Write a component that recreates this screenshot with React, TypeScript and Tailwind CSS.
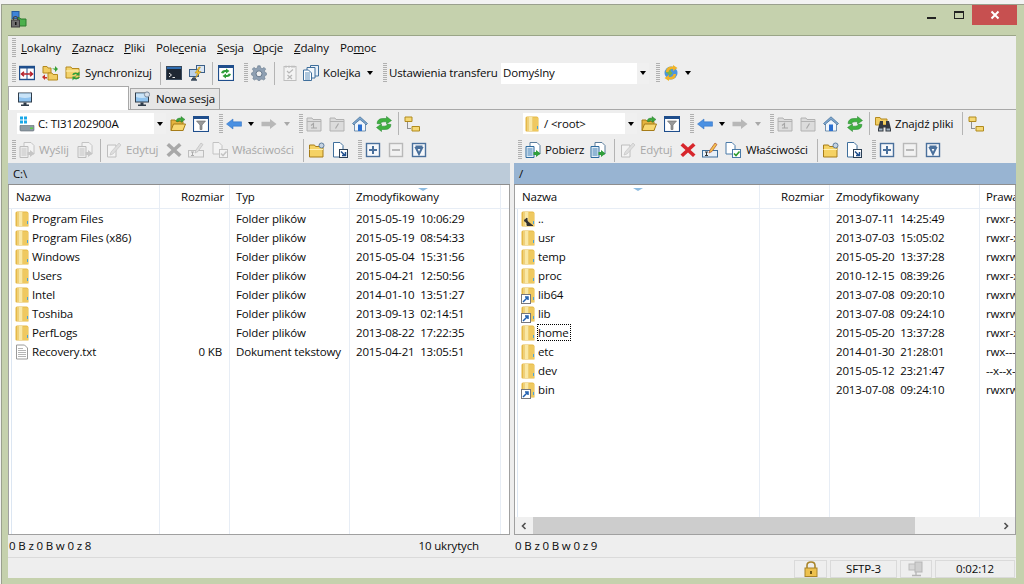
import React from 'react';

type IconProps = { dim?: boolean };
type Kids = { children: React.ReactNode };

function Svg({ children, dim }: Kids & IconProps) {
  return (
    <svg width="16" height="16" viewBox="0 0 16 16" className={`shrink-0 ${dim ? 'opacity-35 grayscale' : ''}`}>
      {children}
    </svg>
  );
}

function Folder() {
  return (
    <Svg>
      <path d="M0.5 2 Q0.5 0.5 2 0.5 H11.5 Q13.5 0.5 13.5 2.5 V15.5 H1.5 Q0.5 15.5 0.5 14.5 Z" fill="#e5b947" />
      <rect x="2.5" y="1" width="5" height="14" fill="#f9e8a6" />
      <path d="M2.5 1 H4 V15 H2.5 Z" fill="#efd07a" />
      <rect x="8" y="1.5" width="5" height="13.5" fill="#efc960" />
      <rect x="12" y="10" width="1" height="3" fill="#4aa3d8" />
    </Svg>
  );
}

function ShortcutBadge() {
  return (
    <span className="absolute left-0 bottom-[-1px] w-[10px] h-[10px] bg-white border border-[#77777c] flex items-center justify-center">
      <svg width="8" height="8" viewBox="0 0 8 8">
        <path d="M1 7 L5 3 M3 2 H6 V5" stroke="#1f5fb0" strokeWidth="1.5" fill="none" />
      </svg>
    </span>
  );
}

function RowIcon({ kind }: { kind: string }) {
  if (kind === 'txt') {
    return (
      <Svg>
        <path d="M1.5 1 H9.5 L12.5 4 V15 H1.5 Z" fill="#fff" stroke="#9a9a9a" />
        <path d="M3 4.5 H8 M3 6.5 H11 M3 8.5 H11 M3 10.5 H11 M3 12.5 H11" stroke="#b5b5b5" />
      </Svg>
    );
  }
  return (
    <span className="relative w-[16px] h-[16px] shrink-0">
      <Folder />
      {kind === 'link' && <ShortcutBadge />}
      {kind === 'up' && (
        <svg width="12" height="10" viewBox="0 0 12 10" className="absolute left-[2px] top-[6px]">
          <path d="M1 3.5 L4 1 V6 Z M4 3.5 V8.5 H10" fill="#333" stroke="#333" strokeWidth="1" />
        </svg>
      )}
    </span>
  );
}

function Compare() {
  return (
    <Svg>
      <rect x="0.5" y="1.5" width="15" height="13" fill="#fff" stroke="#1f4e8c" strokeWidth="1.4" />
      <rect x="0.5" y="1.5" width="15" height="2" fill="#1f4e8c" />
      <path d="M8 3 V14" stroke="#1f4e8c" />
      <path d="M2.5 9 H13.5 M5 6.8 L2.5 9 L5 11.2 M11 6.8 L13.5 9 L11 11.2" stroke="#b5202a" strokeWidth="1.5" fill="none" />
    </Svg>
  );
}

function SyncFolders() {
  return (
    <Svg>
      <path d="M1 1.5 H5 L6 3 H9 V8 H1 Z" fill="#f1cd62" stroke="#b58a1e" />
      <path d="M6 8 H10 L11 9.5 H15.5 V15 H6 Z" fill="#f1cd62" stroke="#b58a1e" />
      <path d="M10 3.5 H13 V1 L16 4 L13 7 V5" fill="#35a035" />
      <path d="M5 12 H3 V9.5 L0 12 L3 15 V13.5 H5 Z" fill="#c8332b" />
    </Svg>
  );
}

function SyncFolder() {
  return (
    <Svg>
      <path d="M1 2 H6 L7 3.5 H14 V13 H1 Z" fill="#f3d36c" stroke="#b58a1e" />
      <path d="M1 6 H14" stroke="#fff2b8" />
      <path d="M7 9.5 Q9 6.5 13 8 L14.5 6.5 V10.5 H10.5 L12 9.2 Q10 8.6 9 10 Z" fill="#2f9e3a" />
      <path d="M15 12 Q13 15.5 9 14 L7.5 15.5 V11.5 H11.5 L10 12.8 Q12 13.4 13 12 Z" fill="#2f9e3a" />
    </Svg>
  );
}

function Terminal() {
  return (
    <Svg>
      <rect x="0.5" y="1.5" width="15" height="13" fill="#1e2733" stroke="#3a4a5c" />
      <rect x="1" y="2" width="14" height="2" fill="#2f6db0" />
      <path d="M3 8 L5.5 10 L3 12 M6.5 12.5 H9" stroke="#e8e8e8" fill="none" />
    </Svg>
  );
}

function Putty() {
  return (
    <Svg>
      <rect x="7.5" y="0.5" width="8" height="7" fill="#dbe6f3" stroke="#3b5f88" />
      <rect x="0.5" y="4.5" width="9" height="7" fill="#bcd2ea" stroke="#3b5f88" />
      <path d="M3 13.5 H7 M5 11.5 V14 M2 15 H8" stroke="#3b4b5c" strokeWidth="1.3" />
      <path d="M10 2 L6 8 H8.5 L6.5 13 L12 6.5 H9 L11.5 2 Z" fill="#f2c22e" stroke="#b5871a" strokeWidth="0.5" />
    </Svg>
  );
}

function Refresh2() {
  return (
    <Svg>
      <rect x="0.5" y="0.5" width="15" height="15" fill="#fff" stroke="#1f4e8c" strokeWidth="1.2" />
      <rect x="1" y="1" width="14" height="2" fill="#1f4e8c" />
      <path d="M3 8 Q4 4.5 8 5 L8 3.5 L11.5 6 L8 8.5 V7 Q6 6.6 5.3 8.5 Z" fill="#2f9e3a" />
      <path d="M13 9 Q12 12.5 8 12 L8 13.5 L4.5 11 L8 8.5 V10 Q10 10.4 10.7 8.5 Z" fill="#2f9e3a" />
    </Svg>
  );
}

function Gear({ dim }: IconProps) {
  return (
    <Svg dim={dim}>
      <path
        d="M6.8 0.8 H9.2 L9.6 2.9 L11.3 3.6 L13.1 2.4 L14.7 4.1 L13.4 5.9 L14.1 7.5 L15.4 7.9 V10.1 L14.1 10.5 L13.4 12.1 L14.2 13.7 L12.6 15 L11 14 L9.4 14.6 L9 15.4 H7 L6.6 14.6 L5 14 L3.4 15 L1.8 13.7 L2.6 12.1 L1.9 10.5 L0.6 10.1 V7.9 L1.9 7.5 L2.6 5.9 L1.3 4.1 L2.9 2.4 L4.7 3.6 L6.4 2.9 Z"
        fill="#8fa0b3"
        stroke="#66788c"
        strokeWidth="0.6"
      />
      <circle cx="8" cy="8.8" r="3" fill="#eeeeee" stroke="#66788c" />
    </Svg>
  );
}

function QueueDoc() {
  return (
    <Svg dim>
      <rect x="2" y="1.5" width="12" height="14" fill="#fff" stroke="#666" />
      <path d="M4 0.5 V3 M7 0.5 V3 M10 0.5 V3 M12 0.5 V3" stroke="#666" />
      <path d="M5 6 L7 8 L11 4.5 M5.5 10 L10 14 M10 10 L5.5 14" stroke="#555" strokeWidth="1.2" fill="none" />
    </Svg>
  );
}

function QueueDocs() {
  return (
    <Svg>
      <path d="M7.5 0.5 H15.5 V11 H7.5 Z" fill="#e9f1f9" stroke="#3f6f9c" />
      <path d="M4 2.5 H12 V13 H4 Z" fill="#f3f7fb" stroke="#3f6f9c" />
      <path d="M0.5 5 H5.5 L8.5 8 V15.5 H0.5 Z" fill="#fff" stroke="#3f6f9c" />
      <path d="M2 8 H7 M2 10 H7 M2 12 H7 M2 14 H7" stroke="#5f90bc" />
    </Svg>
  );
}

function Globe() {
  return (
    <Svg>
      <circle cx="8" cy="8" r="6.5" fill="#4c95dd" />
      <path d="M5 2.5 L9 3 L7.5 6 L9.5 8 L7 11 L4.5 8.5 L2.5 7 Z" fill="#79b34a" />
      <path d="M3 7 Q3 1 10 1.5 L10 0 L14.5 3 L10 6 V4 Q6 3.5 5.5 7 Z" fill="#f0b429" />
      <path d="M13 9 Q13 15 6 14.5 L6 16 L1.5 13 L6 10 V12 Q10 12.5 10.5 9 Z" fill="#f0b429" />
    </Svg>
  );
}

function Monitor({ small }: { small?: boolean }) {
  return (
    <svg width="16" height="16" viewBox="0 0 16 16" className="shrink-0">
      <rect x="1" y="1.5" width="14" height="10" fill="#2f3c4a" />
      <rect x="2" y="2.5" width="12" height="8" fill="#8fc3ef" />
      <path d="M2 2.5 H14 V6 Q8 8 2 6 Z" fill="#c8e3f8" />
      <path d="M6.5 11.5 H9.5 V13.5 H12 V15 H4 V13.5 H6.5 Z" fill="#2f3c4a" />
      {small && <circle cx="13" cy="3.5" r="2.6" fill="#d8dfe8" stroke="#7e8ea0" />}
    </svg>
  );
}

function Drive() {
  return (
    <svg width="16" height="16" viewBox="0 0 16 16" className="shrink-0">
      <rect x="1" y="0.5" width="3" height="3" fill="#1aa8e8" />
      <rect x="5" y="0.5" width="3" height="3" fill="#1aa8e8" />
      <rect x="1" y="4.5" width="3" height="3" fill="#1aa8e8" />
      <rect x="5" y="4.5" width="3" height="3" fill="#1aa8e8" />
      <path d="M1 9.5 H15 V14 Q15 15 14 15 H2 Q1 15 1 14 Z" fill="#8d9aa3" stroke="#5e6a72" strokeWidth="0.6" />
      <rect x="11" y="11.5" width="3" height="1.5" fill="#5bd04a" />
    </svg>
  );
}

function OpenFolder() {
  return (
    <Svg>
      <path d="M1 4 H5 L6 5.5 H13 V14.5 H1 Z" fill="#e5b43f" stroke="#a67c18" />
      <path d="M1 14.5 L3.5 8 H15.5 L13 14.5 Z" fill="#f8d872" stroke="#a67c18" />
      <path d="M6 5 Q7 1.5 11 2.2 V0.5 L15 3.5 L11 6.5 V4.5 Q8.5 4 8 6 Z" fill="#3da63d" stroke="#21752a" strokeWidth="0.4" />
    </Svg>
  );
}

function Filter() {
  return (
    <Svg>
      <rect x="0.5" y="0.5" width="15" height="15" fill="#fff" stroke="#1f4e8c" strokeWidth="1.1" />
      <rect x="1" y="1" width="14" height="2" fill="#1f4e8c" />
      <path d="M3.5 5 H12.5 L9 9 V13.5 H7 V9 Z" fill="#9a9a9a" stroke="#666" strokeWidth="0.6" />
    </Svg>
  );
}

function Back() {
  return (
    <Svg>
      <path d="M0.5 8 L7 3 V5.8 H15.5 V10.2 H7 V13 Z" fill="#4a90e2" stroke="#2a6cc0" strokeWidth="0.5" />
    </Svg>
  );
}

function Forward() {
  return (
    <Svg dim>
      <path d="M15.5 8 L9 3 V5.8 H0.5 V10.2 H9 V13 Z" fill="#555" />
    </Svg>
  );
}

function DimFolder({ glyph }: { glyph: string }) {
  return (
    <Svg dim>
      <path d="M1 2 H6 L7 3.5 H15 V15 H1 Z" fill="#bbb" stroke="#444" />
      <path d="M1 5.5 H15" stroke="#444" />
      <path d={glyph} stroke="#222" strokeWidth="1.1" fill="none" />
    </Svg>
  );
}

function Home() {
  return (
    <Svg>
      <path d="M8 0.8 L15.5 7.5 L14 9 L8 3.8 L2 9 L0.5 7.5 Z" fill="#7fa8cf" stroke="#3d6a95" strokeWidth="0.7" />
      <path d="M2.5 8 L8 3.5 L13.5 8 V15 H2.5 Z" fill="#f1f6fb" stroke="#3d6a95" strokeWidth="0.7" />
      <rect x="6" y="8.5" width="4" height="6.5" fill="#2a6fd0" />
    </Svg>
  );
}

function Refresh() {
  return (
    <Svg>
      <path d="M1 7.5 Q1.5 2 8 2.5 L10.5 2.5 V0.5 L15.5 4.5 L10.5 8 V5.8 H8 Q4.8 5.6 4.5 8 Z" fill="#3fb13f" stroke="#20812a" strokeWidth="0.5" />
      <path d="M15 8.5 Q14.5 14 8 13.5 H5.5 V15.5 L0.5 11.5 L5.5 8 V10.2 H8 Q11.2 10.4 11.5 8 Z" fill="#3fb13f" stroke="#20812a" strokeWidth="0.5" />
    </Svg>
  );
}

function Tree() {
  return (
    <Svg>
      <path d="M1 1 H8 V5.5 H1 Z" fill="#f5d875" stroke="#b08a1e" />
      <path d="M8 10.5 H15.5 V15 H8 Z" fill="#f5d875" stroke="#b08a1e" />
      <path d="M3.5 6.5 V12.5 H7" stroke="#333" strokeDasharray="1 1" fill="none" />
    </Svg>
  );
}

function Binoculars() {
  return (
    <Svg>
      <path d="M0.5 1.5 H5 L6 3 H12 V9 H0.5 Z" fill="#f1cd62" stroke="#b58a1e" />
      <path d="M5 5 H8 V9 H11 V5 H14 L16 13 V15.5 H10.5 V11.5 H8.5 V15.5 H3 V13 Z" fill="#33383f" />
      <rect x="4" y="12.5" width="3.5" height="2" fill="#9fb0c0" />
      <rect x="11.5" y="12.5" width="3.5" height="2" fill="#9fb0c0" />
    </Svg>
  );
}

function SendDoc({ dim }: IconProps) {
  return (
    <Svg dim={dim}>
      <path d="M5 0.5 H12 L15 3.5 V12 H5 Z" fill="#fff" stroke="#5b7c9a" />
      <path d="M1 4.5 H9 V15.5 H1 Z" fill="#e3eef7" stroke="#2d6a9e" />
      <path d="M2.5 7 H7.5 M2.5 9 H7.5 M2.5 11 H7.5 M2.5 13 H7.5" stroke="#3f7fb3" />
      <path d="M8.5 10 H11 V8 L15.5 11.5 L11 15 V13 H8.5 Z" fill="#2f9e3a" />
    </Svg>
  );
}

function Pencil({ dim }: IconProps) {
  return (
    <Svg dim={dim}>
      <path d="M1.5 3 H10 V15 H1.5 Z" fill="#fff" stroke="#666" />
      <path d="M4 13 L5 10 L13 1 L15 3 L7 12 Z" fill="#f2c14e" stroke="#866a1a" strokeWidth="0.6" />
    </Svg>
  );
}

function Cross({ dim }: IconProps) {
  return (
    <svg width="16" height="16" viewBox="0 0 16 16" className="shrink-0">
      <path
        d="M3 1 L8 5.5 L13 1 L15.5 3.5 L10.5 8 L15.5 12.5 L13 15 L8 10.5 L3 15 L0.5 12.5 L5.5 8 L0.5 3.5 Z"
        fill={dim ? '#a8a8a8' : '#d7262c'}
      />
    </svg>
  );
}

function Rename({ dim }: IconProps) {
  return (
    <Svg dim={dim}>
      <rect x="0.5" y="8.5" width="15" height="6.5" fill="#e8f0f8" stroke="#3f6f9c" />
      <path d="M3 10 H6 M3 13.5 H6 M4.5 10 V13.5" stroke="#333" />
      <path d="M7 11 L8 8 L13 1 L15 2.5 L10 9.5 Z" fill="#f2c14e" stroke="#a23b1c" strokeWidth="0.6" />
    </Svg>
  );
}

function Props({ dim }: IconProps) {
  return (
    <Svg dim={dim}>
      <path d="M1 0.5 H7 L10 3.5 V12 H1 Z" fill="#fff" stroke="#4a7aa8" />
      <rect x="7.5" y="7.5" width="8" height="8" fill="#fff" stroke="#4a7aa8" />
      <path d="M9 11.5 L11 13.5 L14.5 9.5" stroke="#2c9a2c" strokeWidth="1.6" fill="none" />
    </Svg>
  );
}

function NewFolder() {
  return (
    <Svg>
      <path d="M0.5 3 H5.5 L6.5 4.5 H14 V15 H0.5 Z" fill="#f5d264" stroke="#a67c18" />
      <path d="M0.5 7.5 H14" stroke="#fff0b2" />
      <circle cx="12.5" cy="3.5" r="2.5" fill="#c5d3e2" stroke="#5e7d9f" />
    </Svg>
  );
}

function ShortcutFile() {
  return (
    <Svg>
      <path d="M1.5 0.5 H8 L11 3.5 V15 H1.5 Z" fill="#fff" stroke="#3f6f9c" />
      <rect x="7.5" y="7.5" width="8" height="8" fill="#fff" stroke="#2b3f55" />
      <path d="M9 9.5 L13 13.5 M10 13.5 H13.5 V10" stroke="#1f4e8c" strokeWidth="1.5" fill="none" />
    </Svg>
  );
}

function BoxIcon({ glyph, dim }: IconProps & { glyph: string }) {
  return (
    <svg width="16" height="16" viewBox="0 0 16 16" className={`shrink-0 ${dim ? 'opacity-40 grayscale' : ''}`}>
      <rect x="1.5" y="1.5" width="13" height="13" fill="#f6f8fb" stroke="#4a709c" strokeWidth="1.4" />
      <path d={glyph} stroke="#4a709c" strokeWidth="2" fill="none" />
    </svg>
  );
}

function Lock() {
  return (
    <Svg>
      <path d="M4 7 V4.5 Q4 1 8 1 Q12 1 12 4.5 V7" stroke="#a8842a" strokeWidth="1.6" fill="none" />
      <rect x="2" y="7" width="12" height="8.5" fill="#edc14e" stroke="#a8842a" />
      <rect x="7" y="10" width="2" height="3" fill="#6e5514" />
    </Svg>
  );
}

function NetDim() {
  return (
    <Svg>
      <rect x="1" y="3" width="9" height="6" fill="#d8d8d8" stroke="#bbb" />
      <rect x="7" y="1" width="7" height="10" fill="#cfcfcf" stroke="#b5b5b5" />
      <path d="M8 11 V14 M4 14.5 H13" stroke="#b5b5b5" strokeWidth="1.3" />
    </Svg>
  );
}

function AppIcon() {
  return (
    <svg width="17" height="17" viewBox="0 0 17 17" className="shrink-0">
      <rect x="2" y="0.5" width="7" height="7" fill="#3d83d8" stroke="#245a9c" />
      <path d="M8 6 L11 8 H16 V15 H10 L8 12 Z" fill="#4cb04c" stroke="#2c7a2c" />
      <path d="M3.5 9 V7.5 Q3.5 5.5 5.5 5.5 Q7.5 5.5 7.5 7.5 V9" stroke="#444" strokeWidth="1.2" fill="none" />
      <rect x="1.5" y="9" width="8" height="7" fill="#6f6f6f" stroke="#3e3e3e" />
      <rect x="5" y="11" width="1.5" height="3" fill="#111" />
    </svg>
  );
}

function Grip() {
  return (
    <span className="w-[10px] shrink-0 flex items-center self-stretch pl-[3px]">
      <span className="w-[4px] h-[20px] bg-[repeating-linear-gradient(to_bottom,#b0b0b0_0,#b0b0b0_1px,#eeeeee_1px,#eeeeee_2px)]" />
    </span>
  );
}

function Sep() {
  return <span className="w-[1px] h-[23px] bg-[#b4b4b4] mr-[5px] shrink-0" />;
}

function Caret({ dim }: IconProps) {
  return (
    <span className={`w-0 h-0 border-x-[3.5px] border-x-transparent border-t-[4px] shrink-0 ${dim ? 'border-t-[#a8a8a8]' : 'border-t-black'}`} />
  );
}

function Btn({ children }: Kids) {
  return <span className="w-[23px] h-[22px] flex items-center shrink-0">{children}</span>;
}

function Combo({ width, icon, text }: { width: string; icon?: React.ReactNode; text: string }) {
  return (
    <div className={`${width} h-[21px] bg-white flex items-center shrink-0`}>
      <span className="flex-1 flex items-center min-w-0 pl-[2px] gap-[3px]">
        {icon}
        <span className="whitespace-nowrap">{text}</span>
      </span>
      <span className="w-[12px] h-[21px] bg-[#f0f0f0] flex items-center justify-center">
        <Caret />
      </span>
    </div>
  );
}

const columnBorder = 'border-r border-[#e7edf5]';

function HeaderCell({ className, children }: { className: string } & Kids) {
  return <div className={`h-[24px] flex items-center border-b border-[#e7edf5] shrink-0 ${className}`}>{children}</div>;
}

function Column({ width, label, right, values }: { width: string; label: string; right?: boolean; values: string[] }) {
  return (
    <div className={`${width} shrink-0 flex flex-col ${columnBorder}`}>
      <HeaderCell className={right ? 'justify-end pr-[5px]' : 'pl-[6px]'}>{label}</HeaderCell>
      <div>
        {values.map((value, index) => (
          <div key={index} className={`h-[19px] flex items-center whitespace-pre ${right ? 'justify-end pr-[7px]' : 'pl-[6px]'}`}>
            {value}
          </div>
        ))}
      </div>
    </div>
  );
}

type FileRow = { name: string; icon: string; focus?: boolean };

function NameColumn({ width, rows }: { width: string; rows: FileRow[] }) {
  return (
    <div className={`${width} shrink-0 flex flex-col ${columnBorder}`}>
      <HeaderCell className="pl-[7px]">Nazwa</HeaderCell>
      <div className="flex-1 ml-[2px] pl-[3px] border-l border-[#dce6f2]">
        {rows.map((row) => (
          <div key={row.name} className="h-[19px] flex items-center whitespace-nowrap">
            <RowIcon kind={row.icon} />
            {row.focus ? (
              <span className="h-[17px] flex items-center pr-[2px] border border-dotted border-black">{row.name}</span>
            ) : (
              <span className="ml-[1px]">{row.name}</span>
            )}
          </div>
        ))}
      </div>
    </div>
  );
}

const localRows: FileRow[] = [
  { name: 'Program Files', icon: 'folder' },
  { name: 'Program Files (x86)', icon: 'folder' },
  { name: 'Windows', icon: 'folder' },
  { name: 'Users', icon: 'folder' },
  { name: 'Intel', icon: 'folder' },
  { name: 'Toshiba', icon: 'folder' },
  { name: 'PerfLogs', icon: 'folder' },
  { name: 'Recovery.txt', icon: 'txt' },
];

const remoteRows: FileRow[] = [
  { name: '..', icon: 'up' },
  { name: 'usr', icon: 'folder' },
  { name: 'temp', icon: 'folder' },
  { name: 'proc', icon: 'folder' },
  { name: 'lib64', icon: 'link' },
  { name: 'lib', icon: 'link' },
  { name: 'home', icon: 'folder', focus: true },
  { name: 'etc', icon: 'folder' },
  { name: 'dev', icon: 'folder' },
  { name: 'bin', icon: 'link' },
];

const localDates = ['2015-05-19  10:06:29', '2015-05-19  08:54:33', '2015-05-04  15:31:56', '2015-04-21  12:50:56', '2014-01-10  13:51:27', '2013-09-13  02:14:51', '2013-08-22  17:22:35', '2015-04-21  13:05:51'];
const remoteDates = ['2013-07-11  14:25:49', '2013-07-03  15:05:02', '2015-05-20  13:37:28', '2010-12-15  08:39:26', '2013-07-08  09:20:10', '2013-07-08  09:24:10', '2015-05-20  13:37:28', '2014-01-30  21:28:01', '2015-05-12  23:21:47', '2013-07-08  09:24:10'];
const rights = ['rwxr-xr-x', 'rwxr-xr-x', 'rwxrwxrwx', 'rwxr-xr-x', 'rwxrwxrwx', 'rwxrwxrwx', 'rwxr-xr-x', 'rwx------', '--x--x--x', 'rwxrwxrwx'];
const plusGlyph = 'M4 8 H12 M8 4 V12';
const minusGlyph = 'M4 8 H12';
const collapseGlyph = 'M4.5 4.5 H11.5 M5 6 L8 12 L11 6 Z';

function NavGroup() {
  return (
    <>
      <span className="w-[7px] shrink-0" />
      <Grip />
      <span className="w-[22px] flex items-center shrink-0"><Back /></span>
      <span className="w-[13px] flex shrink-0"><Caret /></span>
      <Btn><Forward /></Btn>
      <span className="w-[12px] flex shrink-0"><Caret dim /></span>
      <Grip />
      <Btn><DimFolder glyph="M5 12 H11 M5 9.5 L7.5 7.5 V12" /></Btn>
      <Btn><DimFolder glyph="M6.5 12.5 L9.5 7.5" /></Btn>
      <span className="w-[24px] flex shrink-0"><Home /></span>
      <span className="w-[22px] flex shrink-0"><Refresh /></span>
      <Sep />
    </>
  );
}

function TreeButtons() {
  return (
    <>
      <Btn><NewFolder /></Btn>
      <span className="w-[16px] flex shrink-0"><ShortcutFile /></span>
      <span className="w-[7px] shrink-0" />
      <Grip />
      <Btn><BoxIcon glyph={plusGlyph} /></Btn>
      <Btn><BoxIcon glyph={minusGlyph} dim /></Btn>
      <BoxIcon glyph={collapseGlyph} />
    </>
  );
}

function LocalPanel() {
  return (
    <div className="w-[502px] shrink-0 flex flex-col">
      <div className="h-[27px] flex items-center pl-[9px]">
        <Combo width="w-[149px]" icon={<Drive />} text="C: TI31202900A" />
        <span className="w-[4px] shrink-0" />
        <Btn><OpenFolder /></Btn>
        <span className="w-[16px] flex shrink-0"><Filter /></span>
        <NavGroup />
        <Tree />
      </div>
      <div className="h-[26px] flex items-center pl-[1px] text-[#a8a8a8]">
        <Grip />
        <span className="w-[20px] flex shrink-0"><SendDoc dim /></span>
        <span className="w-[38px] whitespace-nowrap shrink-0">Wyślij</span>
        <span className="w-[23px] flex shrink-0"><SendDoc dim /></span>
        <Sep />
        <span className="w-[20px] flex shrink-0"><Pencil dim /></span>
        <span className="w-[40px] whitespace-nowrap shrink-0">Edytuj</span>
        <span className="w-[22px] flex shrink-0"><Cross dim /></span>
        <span className="w-[24px] flex shrink-0"><Rename dim /></span>
        <span className="w-[20px] flex shrink-0"><Props dim /></span>
        <span className="w-[71px] whitespace-nowrap shrink-0">Właściwości</span>
        <Sep />
        <TreeButtons />
      </div>
      <div className="h-[22px] pl-[5px] flex items-center bg-[#bccbd9] border-b border-[#8e8e8e]">C:\</div>
      <div className="h-[349px] bg-white border-l border-r border-[#a0a0a0] flex relative overflow-hidden">
        <span className="absolute left-[409px] top-[3px] w-0 h-0 border-x-[5px] border-x-transparent border-t-[3px] border-t-[#8dbbe0]" />
        <NameColumn width="w-[151px]" rows={localRows} />
        <Column width="w-[70px]" label="Rozmiar" right values={['', '', '', '', '', '', '', '0 KB']} />
        <Column width="w-[120px]" label="Typ" values={['Folder plików', 'Folder plików', 'Folder plików', 'Folder plików', 'Folder plików', 'Folder plików', 'Folder plików', 'Dokument tekstowy']} />
        <Column width="w-[151px]" label="Zmodyfikowany" values={localDates} />
        <div className="flex-1 flex flex-col"><HeaderCell className="">{''}</HeaderCell></div>
      </div>
      <div className="h-[23px] border-t border-[#a0a0a0] flex items-center justify-between pl-[1px] pr-[31px]">
        <span>0 B z 0 B w 0 z 8</span>
        <span>10 ukrytych</span>
      </div>
    </div>
  );
}

function RemotePanel() {
  return (
    <div className="flex-1 min-w-0 flex flex-col">
      <div className="h-[27px] flex items-center pl-[9px]">
        <Combo width="w-[114px]" icon={<Folder />} text="/ <root>" />
        <span className="w-[4px] shrink-0" />
        <Btn><OpenFolder /></Btn>
        <span className="w-[16px] flex shrink-0"><Filter /></span>
        <NavGroup />
        <span className="w-[20px] flex shrink-0"><Binoculars /></span>
        <span className="w-[67px] whitespace-nowrap shrink-0">Znajdź pliki</span>
        <Sep />
        <Tree />
      </div>
      <div className="h-[26px] flex items-center pl-[1px]">
        <Grip />
        <span className="w-[20px] flex shrink-0"><SendDoc /></span>
        <span className="w-[45px] whitespace-nowrap shrink-0">Pobierz</span>
        <span className="w-[24px] flex shrink-0"><SendDoc /></span>
        <Sep />
        <span className="w-[20px] flex shrink-0"><Pencil dim /></span>
        <span className="w-[40px] whitespace-nowrap shrink-0 text-[#a8a8a8]">Edytuj</span>
        <span className="w-[22px] flex shrink-0"><Cross /></span>
        <span className="w-[23px] flex shrink-0"><Rename /></span>
        <span className="w-[21px] flex shrink-0"><Props /></span>
        <span className="w-[71px] whitespace-nowrap shrink-0">Właściwości</span>
        <Sep />
        <TreeButtons />
      </div>
      <div className="h-[22px] pl-[5px] flex items-center bg-[#98b4d2] border-b border-[#8e8e8e]">/</div>
      <div className="h-[349px] bg-white border-l border-r border-[#a0a0a0] flex flex-col relative overflow-hidden">
        <span className="absolute left-[118px] top-[3px] w-0 h-0 border-x-[5px] border-x-transparent border-t-[3px] border-t-[#8dbbe0]" />
        <div className="flex-1 min-h-0 flex">
          <NameColumn width="w-[245px]" rows={remoteRows} />
          <Column width="w-[70px]" label="Rozmiar" right values={[]} />
          <Column width="w-[150px]" label="Zmodyfikowany" values={remoteDates} />
          <Column width="w-[60px]" label="Prawa" values={rights} />
        </div>
        <div className="h-[17px] shrink-0 bg-[#f0f0f0] flex items-center">
          <span className="w-[18px] flex justify-center">
            <svg width="8" height="8" viewBox="0 0 8 8"><path d="M5.5 1 L2.5 4 L5.5 7" stroke="#505050" strokeWidth="1.6" fill="none" /></svg>
          </span>
          <span className="w-[382px] h-[17px] bg-[#cdcdcd]" />
          <span className="flex-1" />
          <span className="w-[18px] flex justify-center">
            <svg width="8" height="8" viewBox="0 0 8 8"><path d="M2.5 1 L5.5 4 L2.5 7" stroke="#505050" strokeWidth="1.6" fill="none" /></svg>
          </span>
        </div>
      </div>
      <div className="h-[23px] border-t border-[#a0a0a0] flex items-center pl-[1px]">0 B z 0 B w 0 z 9</div>
    </div>
  );
}

export default function App() {
  return (
    <div className="w-[1024px] h-[584px] overflow-hidden bg-[#f2f2f2] pt-[4px] pl-[1px] text-[11.5px] tracking-[-0.15px] text-[#0a0a0a] [font-family:'Open_Sans','Noto_Sans',sans-serif]">
      <div className="h-[580px] bg-[#c5d1ad] border-t border-l border-[#9aa08e] flex flex-col">
        {/* Title bar */}
        <div className="h-[30px] shrink-0 flex items-start pl-[8px] pr-[7px]">
          <span className="mt-[6px]"><AppIcon /></span>
          <span className="flex-1" />
          <span className="w-[9px] h-[2px] bg-[#222] mt-[12px]" />
          <span className="w-[10px] h-[8px] border border-t-2 border-[#222] mt-[6px] ml-[18px]" />
          <span className="w-[45px] h-[20px] bg-[#c75050] ml-[8px] flex items-center justify-center">
            <svg width="10" height="10" viewBox="0 0 10 10"><path d="M1.5 1.5 L8.5 8.5 M8.5 1.5 L1.5 8.5" stroke="#fff" strokeWidth="2" /></svg>
          </span>
        </div>

        <div className="flex-1 min-h-0 ml-[6px] mr-[8px] mb-[6px] bg-[#eeeeee] border-t border-[#9aa587] flex flex-col">
          {/* Menu */}
          <div className="h-[24px] shrink-0 flex items-center pl-[1px]">
            <Grip />
            <span className="flex items-center gap-[10px] ml-[2px] whitespace-nowrap">
              <span className="w-[41px]"><u>L</u>okalny</span>
              <span className="w-[42px]"><u>Z</u>aznacz</span>
              <span className="w-[22px]"><u>P</u>liki</span>
              <span className="w-[51px]">Pole<u>c</u>enia</span>
              <span className="w-[26px]"><u>S</u>esja</span>
              <span className="w-[31px]"><u>O</u>pcje</span>
              <span className="w-[36px]"><u>Z</u>dalny</span>
              <span>Po<u>m</u>oc</span>
            </span>
          </div>

          {/* Main toolbar */}
          <div className="h-[26px] shrink-0 flex items-center pl-[1px]">
            <Grip />
            <Btn><Compare /></Btn>
            <Btn><SyncFolders /></Btn>
            <span className="w-[20px] flex shrink-0"><SyncFolder /></span>
            <span className="w-[75px] whitespace-nowrap shrink-0">Synchronizuj</span>
            <Sep />
            <Btn><Terminal /></Btn>
            <Btn><Putty /></Btn>
            <Sep />
            <Btn><Refresh2 /></Btn>
            <Grip />
            <Btn><Gear /></Btn>
            <Sep />
            <span className="w-[23px] flex shrink-0 pl-[2px]"><QueueDoc /></span>
            <span className="w-[20px] flex shrink-0"><QueueDocs /></span>
            <span className="w-[44px] whitespace-nowrap shrink-0">Kolejka</span>
            <Caret />
            <span className="w-[7px] shrink-0" />
            <Grip />
            <span className="w-[112px] whitespace-nowrap shrink-0 -ml-[1px]">Ustawienia transferu</span>
            <Combo width="w-[148px]" text="Domyślny" />
            <span className="w-[4px] shrink-0" />
            <Grip />
            <span className="w-[22px] flex shrink-0"><Globe /></span>
            <Caret />
          </div>

          {/* Session tabs */}
          <div className="h-[24px] shrink-0 flex items-end border-b border-[#a8a8a8] relative">
            <div className="w-[121px] h-[24px] bg-white border-t border-l border-r border-[#a8a8a8] -mb-[1px] relative flex items-center pl-[8px]">
              <Monitor />
            </div>
            <div className="w-[90px] h-[21px] ml-[1px] bg-[#e6e6e6] border-t border-l border-r border-[#a8a8a8] flex items-center pl-[3px] gap-[6px]">
              <Monitor small />
              <span className="whitespace-nowrap">Nowa sesja</span>
            </div>
          </div>

          {/* Panels */}
          <div className="shrink-0 flex gap-[4px] bg-[#eeeeee]">
            <LocalPanel />
            <RemotePanel />
          </div>

          {/* Status bar */}
          <div className="flex-1 min-h-0 border-t border-[#dadada] flex items-center justify-end pr-[1px] pt-[1px] gap-[3px]">
            <span className="w-[33px] h-[18px] border border-[#dadada] flex items-center justify-center"><Lock /></span>
            <span className="w-[67px] h-[18px] border border-[#dadada] flex items-center justify-center">SFTP-3</span>
            <span className="w-[32px] h-[18px] border border-[#dadada] flex items-center justify-center"><NetDim /></span>
            <span className="w-[80px] h-[18px] border border-[#dadada] flex items-center justify-center">0:02:12</span>
          </div>
        </div>
      </div>
    </div>
  );
}
